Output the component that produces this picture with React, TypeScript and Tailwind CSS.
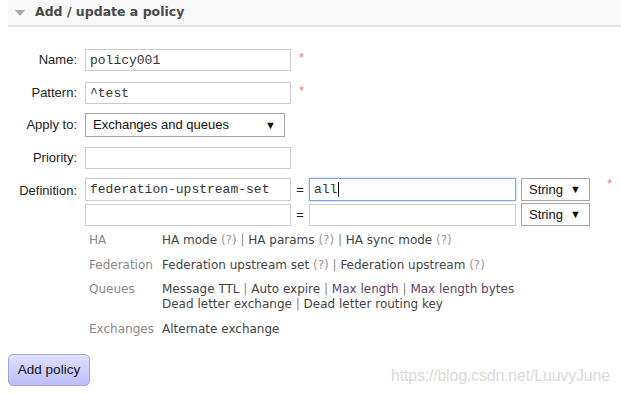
import { ReactNode } from 'react'

const inputCls =
  'h-[22px] border border-[#cccccc] bg-white px-[4px] text-[13px] text-[#333] outline-none font-["Liberation_Mono",monospace]'

const Star = ({ className = '' }: { className?: string }) => (
  <span className={`text-[13px] leading-none text-[#f08080] ${className}`}>*</span>
)

const Row = ({ label, children, className = '' }: { label: string; children: ReactNode; className?: string }) => (
  <div className={`flex items-center ${className}`}>
    <label className="w-[69px] shrink-0 text-right text-[13px] text-[#222]">{label}</label>
    <div className="ml-[8px] flex items-center">{children}</div>
  </div>
)

const FakeSelect = ({ value, className = '' }: { value: string; className?: string }) => (
  <div
    className={`flex items-center justify-between border border-[#a6a6a6] bg-white pl-[7px] pr-[8px] text-[13px] text-[#111] ${className}`}
  >
    <span>{value}</span>
    <span className="text-[11px] text-[#111]">▼</span>
  </div>
)

const Q = () => <span className="text-[#999]">(?)</span>
const Sep = () => <span className="text-[#888]"> | </span>

const HelpRow = ({ label, children, className = '' }: { label: string; children: ReactNode; className?: string }) => (
  <div className={`flex ${className}`}>
    <div className="w-[73px] shrink-0 text-[#888]">{label}</div>
    <div className="text-[#444]">{children}</div>
  </div>
)

export default function App() {
  return (
    <div className='relative h-[394px] w-[621px] overflow-hidden bg-white font-["Liberation_Sans",Arial,sans-serif]'>
      <div className="ml-[8px] flex h-[27px] items-center border-b-2 border-[#e4e4e4] bg-[#f8f8f8] pl-[7px]">
        <span className="mr-[10px] h-0 w-0 border-x-[5px] border-t-[6px] border-x-transparent border-t-[#a8a8a8]" />
        <h2 className='text-[12.5px] font-bold text-[#484848] font-["DejaVu_Sans",Verdana,sans-serif]'>
          Add / update a policy
        </h2>
      </div>

      <div className="ml-[8px] mt-[22px] flex flex-col">
        <Row label="Name:">
          <input className={`${inputCls} w-[206px]`} defaultValue="policy001" readOnly />
          <Star className="ml-[8px] -mt-[5px]" />
        </Row>
        <Row label="Pattern:" className="mt-[11px]">
          <input className={`${inputCls} w-[206px]`} defaultValue="^test" readOnly />
          <Star className="ml-[8px] -mt-[5px]" />
        </Row>
        <Row label="Apply to:" className="mt-[9px]">
          <FakeSelect value="Exchanges and queues" className="h-[24px] w-[200px]" />
        </Row>
        <Row label="Priority:" className="mt-[10px]">
          <input className={`${inputCls} w-[206px]`} readOnly />
        </Row>

        <div className="mt-[9px] flex items-start">
          <label className="mt-[3px] w-[69px] shrink-0 text-right text-[13px] text-[#222]">Definition:</label>
          <div className="ml-[8px] flex flex-col gap-[2px]">
            <div className="flex items-center">
              <input className={`${inputCls} h-[23px] w-[206px]`} defaultValue="federation-upstream-set" readOnly />
              <span className="w-[18px] text-center text-[13px] text-[#222]">=</span>
              <div className="flex h-[23px] w-[207px] items-center border border-[#7fa4e8] bg-white px-[4px] text-[13px] text-[#333] shadow-[0_0_2px_#9bbcf2] font-['Liberation_Mono',monospace]">
                all<span className="ml-[1px] inline-block h-[15px] w-px bg-black" />
              </div>
              <FakeSelect value="String" className="ml-[5px] h-[23px] w-[69px]" />
              <Star className="ml-[17px] -mt-[12px]" />
            </div>
            <div className="flex items-center">
              <input className={`${inputCls} w-[206px]`} readOnly />
              <span className="w-[18px] text-center text-[13px] text-[#222]">=</span>
              <input className={`${inputCls} w-[207px]`} readOnly />
              <FakeSelect value="String" className="ml-[5px] h-[23px] w-[69px]" />
            </div>
          </div>
        </div>

        <div className='ml-[81px] mt-[7px] flex flex-col text-[12px] leading-[15px] font-["DejaVu_Sans",Verdana,sans-serif]'>
          <HelpRow label="HA">
            HA mode <Q />
            <Sep />
            HA params <Q />
            <Sep />
            HA sync mode <Q />
          </HelpRow>
          <HelpRow label="Federation" className="mt-[10px]">
            Federation upstream set <Q />
            <Sep />
            Federation upstream <Q />
          </HelpRow>
          <HelpRow label="Queues" className="mt-[9px]">
            <div>
              Message TTL<Sep />Auto expire<Sep />
              <span className="text-[#5e3f66]">Max length</span>
              <Sep />
              <span className="text-[#5e3f66]">Max length bytes</span>
            </div>
            <div>
              Dead letter exchange<Sep />Dead letter routing key
            </div>
          </HelpRow>
          <HelpRow label="Exchanges" className="mt-[10px]">
            Alternate exchange
          </HelpRow>
        </div>

        <button className="mt-[17px] h-[32px] w-[82px] rounded-[5px] border border-[#a3a3d8] bg-gradient-to-b from-[#e0e0ff] to-[#bdbdfb] text-[13.5px] text-[#111]">
          Add policy
        </button>
      </div>

      <div className="absolute left-[391px] top-[364px] text-[16px] tracking-[-0.2px] text-[#dadada]">
        https://blog.csdn.net/LuuvyJune
      </div>
    </div>
  )
}
